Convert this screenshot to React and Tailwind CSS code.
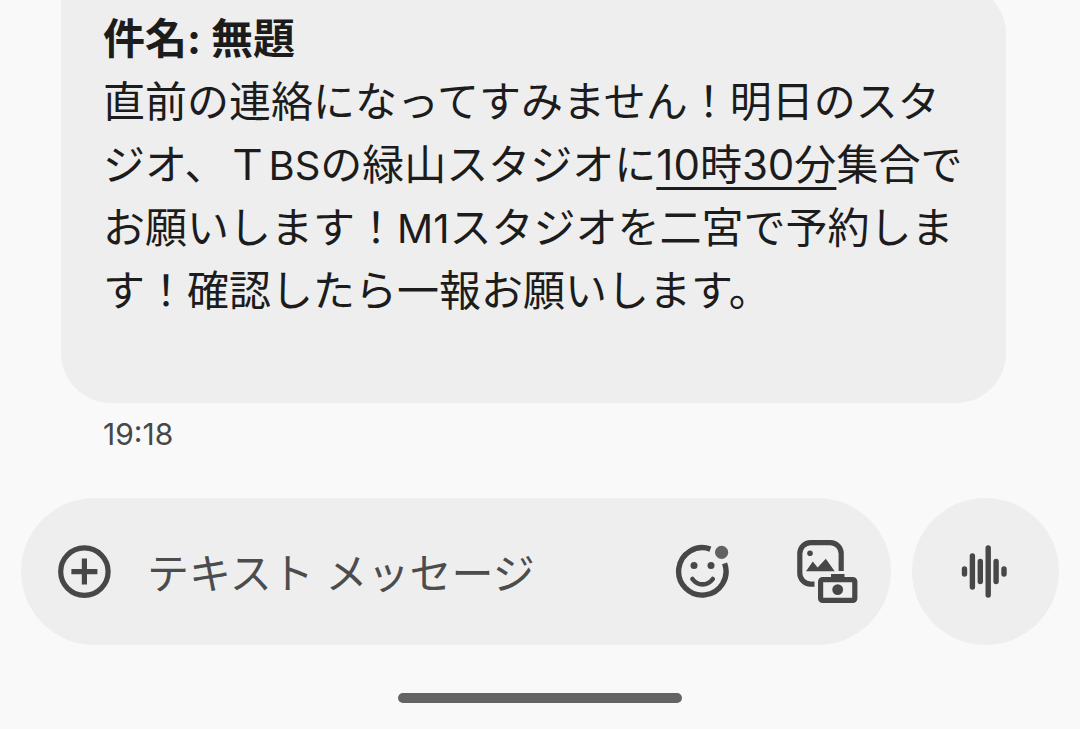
function PlusIcon() {
  return (
    <svg viewBox="0 0 54 54" className="h-[54px] w-[54px]" fill="none" stroke="currentColor" strokeWidth="5.2" aria-hidden="true">
      <circle cx="27.4" cy="26.6" r="23.7" />
      <path d="M27.400 13.500v26M14.400 26.600h26" />
    </svg>
  );
}

function EmojiIcon() {
  return (
    <svg viewBox="0 0 56 56" className="h-14 w-14" fill="none" stroke="currentColor" strokeWidth="5.4" aria-hidden="true">
      <path d="M35.400 5.100A23.700 23.700 0 1 0 49.600 19.300" />
      <circle cx="19" cy="21.400" r="3.500" fill="currentColor" stroke="none" />
      <circle cx="36" cy="21.400" r="3.500" fill="currentColor" stroke="none" />
      <path d="M17.400 35q4 5.400 10.200 5.400t10.200-5.400" strokeWidth="4.600" strokeLinecap="round" />
      <circle cx="46.600" cy="8.300" r="6.600" fill="#626262" stroke="none" />
    </svg>
  );
}

function GalleryIcon() {
  return (
    <svg viewBox="0 0 64 64" className="h-16 w-16" fill="none" stroke="currentColor" strokeWidth="5.2" aria-hidden="true">
      <path d="M19.500 44.200H15.600A11 11 0 0 1 4.800 33.200V13.600A11 11 0 0 1 15.600 2.600H35.400A11 11 0 0 1 46.200 13.600V31" />
      <circle cx="15" cy="13.200" r="2.800" fill="currentColor" stroke="none" />
      <path d="M11 31.200 17.800 21.500 22.600 27.500 30.800 18.700 39.700 31.200Z" fill="currentColor" stroke="none" />
      <rect x="25.600" y="39.600" width="34.200" height="20.800" rx="2" />
      <path d="M36 34h13.500v4H36z" fill="currentColor" stroke="none" />
      <circle cx="42.700" cy="49.600" r="5.400" fill="currentColor" stroke="none" />
    </svg>
  );
}

function WaveIcon() {
  return (
    <svg viewBox="0 0 46 54" className="mr-1 h-[54px] w-[46px]" fill="none" stroke="currentColor" strokeWidth="5.4" strokeLinecap="round" aria-hidden="true">
      <path d="M3.500 24v5M11.400 11v31M19.300 16.500v20M27.200 3v47M35.100 16.500v20M43 24v5" />
    </svg>
  );
}

function Latin({ children }) {
  return <span className="text-[40px] leading-none">{children}</span>;
}

export default function App() {
  return (
    <div className="min-h-screen overflow-hidden bg-[#f9f9f9] font-[Inter,'Noto_Sans_CJK_JP',sans-serif] text-[#1c1c1c]" lang="ja">
      <main className="pr-[74px] pl-[61px]">
        <article className="-mt-4 rounded-tl-md rounded-r-[50px] rounded-bl-[50px] bg-[#eeeeee] pt-[23px] pr-10 pb-[81px] pl-[42px] text-[42px] leading-[63px]">
          <h1 className="font-bold">件名: 無題</h1>
          <p>
            直前の連絡になってすみません！明日のスタジオ、Ｔ<Latin>BS</Latin>の緑山スタジオに
            <a href="#time" className="underline decoration-[3px] underline-offset-[7px]">10時30分</a>
            集合でお願いします！<Latin>M1</Latin>スタジオを二宮で予約します！確認したら一報お願いします。
          </p>
        </article>
        <time className="block pt-[11px] pl-[42px] text-[30px] leading-[40px] text-[#474747]">19:18</time>
      </main>

      <form className="mt-11 flex gap-[21px] px-[21px] text-[#474747]" onSubmit={(e) => e.preventDefault()}>
        <div className="flex h-[147px] min-w-0 flex-1 items-center rounded-full bg-[#eeeeee] pr-8 pl-9">
          <button type="button" aria-label="添付" className="shrink-0">
            <PlusIcon />
          </button>
          <input
            type="text"
            aria-label="テキスト メッセージ"
            placeholder="テキスト メッセージ"
            className="ml-9 h-[72px] min-w-0 flex-1 bg-transparent pt-1 text-[42px] outline-none placeholder:text-[#4c4c4c]"
          />
          <button type="button" aria-label="絵文字" className="shrink-0">
            <EmojiIcon />
          </button>
          <button type="button" aria-label="ギャラリー" className="ml-16 shrink-0">
            <GalleryIcon />
          </button>
        </div>
        <button type="button" aria-label="音声メッセージ" className="flex h-[147px] w-[147px] shrink-0 items-center justify-center rounded-full bg-[#eeeeee]">
          <WaveIcon />
        </button>
      </form>

      <div className="mx-auto mt-12 h-[10px] w-[284px] rounded-full bg-[#646464]" />
    </div>
  );
}
